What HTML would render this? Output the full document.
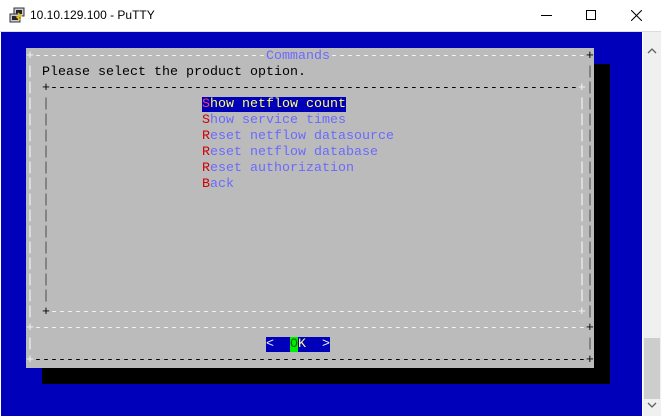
<!DOCTYPE html>
<html><head><meta charset="utf-8"><style>
*{margin:0;padding:0;box-sizing:border-box}
body{width:661px;height:418px;overflow:hidden;background:#fff;position:relative;font-family:"Liberation Sans",sans-serif}
#title{position:absolute;left:0;top:0;width:661px;height:32px;background:#fff;border-bottom:1px solid #ddd}
#title .t{position:absolute;left:30px;top:8px;font-size:12px;color:#000}
#term{position:absolute;left:1px;top:32px;width:641px;height:384px;background:#0000bb}
#sb{position:absolute;left:643px;top:32px;width:18px;height:384px;background:#f0f0f0}
#thumb{position:absolute;left:644px;top:338px;width:16px;height:61px;background:#cdcdcd}
#shadow{position:absolute;left:42px;top:64px;width:568px;height:320px;background:#000}
#dlg{position:absolute;left:26px;top:48px;width:568px;height:320px;background:#bbbbbb}
.r{position:absolute;left:26px;width:568px;height:16px;line-height:16px;font-family:"Liberation Mono",monospace;font-size:13.33px;white-space:pre;color:#000}
.r span.a{position:absolute;top:0}
.w{color:#f4f4f4}.k{color:#000}.g{color:#555}.b{color:#6a6aff}.red{color:#d00000}
.sel{background:#0000bb}
</style></head><body>
<div id="title">
<svg style="position:absolute;left:9px;top:7px" width="16" height="17" viewBox="0 0 16 17"><rect x="5" y="1" width="10" height="8" fill="#ccc" stroke="#333"/><rect x="7" y="3" width="6" height="4" fill="#223"/><rect x="1" y="7" width="10" height="8" fill="#ccc" stroke="#333"/><rect x="3" y="9" width="6" height="4" fill="#223"/><path d="M9 6 L12 9 L8 10 L11 13" stroke="#e8c000" stroke-width="1.5" fill="none"/></svg>
<div class="t">10.10.129.100 - PuTTY</div>
<div style="position:absolute;left:541px;top:15px;width:11px;height:1px;background:#000"></div>
<div style="position:absolute;left:586px;top:10px;width:10px;height:10px;border:1px solid #000"></div>
<svg style="position:absolute;left:631px;top:10px" width="11" height="11"><path d="M0 0L11 11M11 0L0 11" stroke="#000" stroke-width="1"/></svg>
</div>
<div id="term"></div>
<div id="sb"><svg style="position:absolute;left:4px;top:16px" width="10" height="6"><path d="M1 5L5 1L9 5" stroke="#606060" fill="none" stroke-width="1.3"/></svg><svg style="position:absolute;left:4px;top:370px" width="10" height="6"><path d="M1 1L5 5L9 1" stroke="#606060" fill="none" stroke-width="1.3"/></svg></div>
<div id="thumb"></div>
<div id="shadow"></div>
<div id="dlg"></div>

<div class="r" style="top:49px"><span class="w">+-----------------------------</span><span class="b">Commands</span><span class="w">--------------------------------</span><span class="k">+</span></div>
<div class="r" style="top:65px"><span class="a w" style="left:0">|</span><span class="a" style="left:16px">Please select the product option.</span><span class="a g" style="left:560px">|</span></div>
<div class="r" style="top:81px"><span class="a w" style="left:0">|</span><span class="a" style="left:16px"><span class="k">+------------------------------------------------------------------</span><span class="w">+</span></span><span class="a g" style="left:560px">|</span></div>

<div class="r" style="top:97px"><span class="a w" style="left:0">|</span><span class="a g" style="left:16px">|</span><span class="a" style="left:176px"><span class="sel"><span style="color:#ff4060">S</span><span style="color:#ffff70">how netflow count</span></span></span><span class="a w" style="left:552px">|</span><span class="a g" style="left:560px">|</span></div>
<div class="r" style="top:113px"><span class="a w" style="left:0">|</span><span class="a g" style="left:16px">|</span><span class="a" style="left:176px"><span class="red">S</span><span class="b">how service times</span></span><span class="a w" style="left:552px">|</span><span class="a g" style="left:560px">|</span></div>
<div class="r" style="top:129px"><span class="a w" style="left:0">|</span><span class="a g" style="left:16px">|</span><span class="a" style="left:176px"><span class="red">R</span><span class="b">eset netflow datasource</span></span><span class="a w" style="left:552px">|</span><span class="a g" style="left:560px">|</span></div>
<div class="r" style="top:145px"><span class="a w" style="left:0">|</span><span class="a g" style="left:16px">|</span><span class="a" style="left:176px"><span class="red">R</span><span class="b">eset netflow database</span></span><span class="a w" style="left:552px">|</span><span class="a g" style="left:560px">|</span></div>
<div class="r" style="top:161px"><span class="a w" style="left:0">|</span><span class="a g" style="left:16px">|</span><span class="a" style="left:176px"><span class="red">R</span><span class="b">eset authorization</span></span><span class="a w" style="left:552px">|</span><span class="a g" style="left:560px">|</span></div>
<div class="r" style="top:177px"><span class="a w" style="left:0">|</span><span class="a g" style="left:16px">|</span><span class="a" style="left:176px"><span class="red">B</span><span class="b">ack</span></span><span class="a w" style="left:552px">|</span><span class="a g" style="left:560px">|</span></div>
<div class="r" style="top:193px"><span class="a w" style="left:0">|</span><span class="a g" style="left:16px">|</span><span class="a w" style="left:552px">|</span><span class="a g" style="left:560px">|</span></div>
<div class="r" style="top:209px"><span class="a w" style="left:0">|</span><span class="a g" style="left:16px">|</span><span class="a w" style="left:552px">|</span><span class="a g" style="left:560px">|</span></div>
<div class="r" style="top:225px"><span class="a w" style="left:0">|</span><span class="a g" style="left:16px">|</span><span class="a w" style="left:552px">|</span><span class="a g" style="left:560px">|</span></div>
<div class="r" style="top:241px"><span class="a w" style="left:0">|</span><span class="a g" style="left:16px">|</span><span class="a w" style="left:552px">|</span><span class="a g" style="left:560px">|</span></div>
<div class="r" style="top:257px"><span class="a w" style="left:0">|</span><span class="a g" style="left:16px">|</span><span class="a w" style="left:552px">|</span><span class="a g" style="left:560px">|</span></div>
<div class="r" style="top:273px"><span class="a w" style="left:0">|</span><span class="a g" style="left:16px">|</span><span class="a w" style="left:552px">|</span><span class="a g" style="left:560px">|</span></div>
<div class="r" style="top:289px"><span class="a w" style="left:0">|</span><span class="a g" style="left:16px">|</span><span class="a w" style="left:552px">|</span><span class="a g" style="left:560px">|</span></div>
<div class="r" style="top:305px"><span class="a w" style="left:0">|</span><span class="a" style="left:16px"><span class="k">+</span><span class="w">------------------------------------------------------------------+</span></span><span class="a g" style="left:560px">|</span></div>
<div class="r" style="top:321px"><span class="w">+---------------------------------------------------------------------</span><span class="k">+</span></div>
<div class="r" style="top:337px"><span class="a w" style="left:0">|</span><span class="a" style="left:240px"><span class="sel"><span class="w">&lt;  </span><span style="background:#00ee00;color:#006000">O</span><span style="color:#ffff90">K</span><span class="w">  &gt;</span></span></span><span class="a g" style="left:560px">|</span></div>
<div class="r" style="top:353px"><span class="w">+</span><span class="k">---------------------------------------------------------------------+</span></div>
</body></html>
